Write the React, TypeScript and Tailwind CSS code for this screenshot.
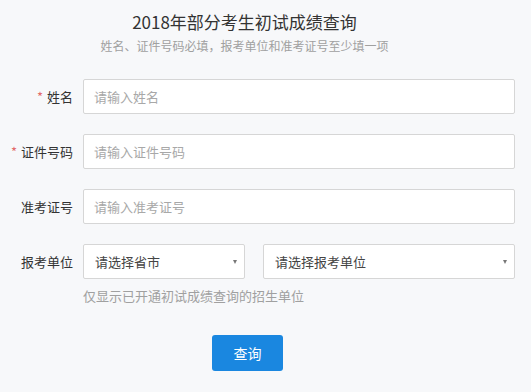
import React from 'react';

const font = { fontFamily: '"Noto Sans CJK SC", "Liberation Sans", sans-serif' };

function Field({ label, required, placeholder }: { label: string; required?: boolean; placeholder: string }) {
  return (
    <div className="flex items-center h-[35px]">
      <div className="w-[73px] text-right text-[13px] text-[#333] leading-none">
        {required && <span className="text-[#e26a6a] mr-[4px]">*</span>}
        {label}
      </div>
      <input
        className="ml-[10px] w-[432px] h-[35px] bg-white border border-[#d6d6d6] rounded-[2px] px-[10px] text-[13px] text-[#333] placeholder:text-[#a8a8a8] outline-none"
        placeholder={placeholder}
        style={font}
      />
    </div>
  );
}

function Select({ text, className }: { text: string; className: string }) {
  return (
    <div className={`h-[35px] bg-white border border-[#d6d6d6] rounded-[2px] flex items-center justify-between pl-[11px] pr-[7px] ${className}`}>
      <span className="text-[13px] text-[#444]">{text}</span>
      <span className="w-0 h-0 border-l-[2.5px] border-r-[2.5px] border-t-[4px] border-l-transparent border-r-transparent border-t-[#777]" />
    </div>
  );
}

export default function App() {
  return (
    <div className="w-[531px] h-[392px] bg-[#f7f8fa] overflow-hidden" style={font}>
      <div className="w-[489px] text-center pt-[10px]">
        <h1 className="text-[17px] leading-[24px] text-[#333]">2018年部分考生初试成绩查询</h1>
        <p className="mt-[4px] text-[12px] leading-[16px] text-[#a0a0a0]">姓名、证件号码必填，报考单位和准考证号至少填一项</p>
      </div>

      <div className="mt-[25px] flex flex-col gap-[20px]">
        <Field label="姓名" required placeholder="请输入姓名" />
        <Field label="证件号码" required placeholder="请输入证件号码" />
        <Field label="准考证号" placeholder="请输入准考证号" />
        <div className="flex items-center h-[35px]">
          <div className="w-[73px] text-right text-[13px] text-[#333] leading-none">报考单位</div>
          <div className="ml-[10px] flex gap-[18px]">
            <Select text="请选择省市" className="w-[162px]" />
            <Select text="请选择报考单位" className="w-[252px]" />
          </div>
        </div>
      </div>

      <p className="ml-[83px] mt-[8px] text-[13px] leading-[18px] text-[#a0a0a0]">仅显示已开通初试成绩查询的招生单位</p>

      <button className="ml-[212px] mt-[30px] w-[71px] h-[36px] bg-[#1a87e0] rounded-[3px] text-white text-[14px]" style={font}>
        查询
      </button>
    </div>
  );
}
